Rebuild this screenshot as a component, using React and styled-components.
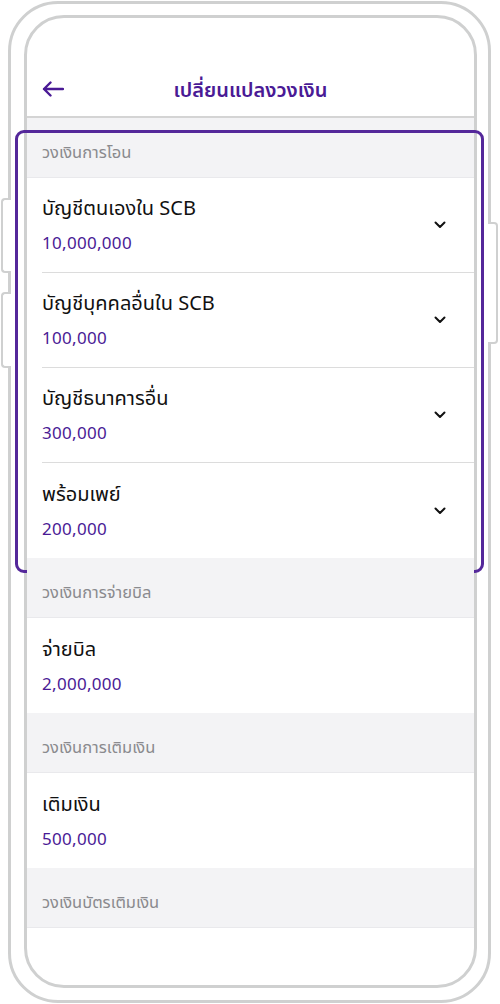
import React from "react";
import styled, { createGlobalStyle } from "styled-components";

const Global = createGlobalStyle`
  html, body { margin: 0; padding: 0; background: #fff; }
  body { font-family: "Noto Sans Thai", "Noto Sans", "DejaVu Sans", sans-serif; }
  * { box-sizing: border-box; }
`;

const PURPLE = "#4a1a95";
const FRAME = "#cfd0d0";

const Page = styled.div`
  width: 500px;
  height: 1004px;
  padding: 1px 9px 1px 8px;
  background: #fff;
`;

const Phone = styled.div`
  position: relative;
  height: 1002px;
  border: 3px solid ${FRAME};
  border-radius: 50px;
  padding: 11px 11px 12px 13px;
  background: #fff;
`;

const SideButton = styled.div`
  position: absolute;
  width: 10px;
  top: ${(p) => p.$top}px;
  height: ${(p) => p.$h}px;
  ${(p) => (p.$side === "left" ? "left: -10px;" : "right: -10px;")}
  border: 2px solid ${FRAME};
  ${(p) => (p.$side === "left" ? "border-right: none;" : "border-left: none;")}
  border-radius: ${(p) => (p.$side === "left" ? "4px 0 0 4px" : "0 4px 4px 0")};
  background: #fff;
`;

const Screen = styled.div`
  height: 973px;
  border: 3px solid ${FRAME};
  border-radius: 40px;
  display: flex;
  flex-direction: column;
  background: #fff;
`;

const Header = styled.header`
  height: 100px;
  flex: none;
  display: flex;
  align-items: center;
  padding: 44px 0 0 15px;
  border-bottom: 2px solid #d4d4d4;
  position: relative;
`;

const BackBtn = styled.button`
  border: 0;
  background: none;
  padding: 0;
  width: 22px;
  height: 16px;
  display: flex;
  cursor: pointer;
`;

const Title = styled.h1`
  position: absolute;
  left: 0;
  right: 0;
  bottom: 11px;
  margin: 0;
  text-align: center;
  color: ${PURPLE};
  font-size: 20px;
  font-weight: 600;
  line-height: 28px;
  pointer-events: none;
`;

const Group = styled.section`
  position: relative;
  ${(p) =>
    p.$highlight &&
    `
    &::after {
      content: "";
      position: absolute;
      top: 12px;
      bottom: -15px;
      left: -12px;
      right: -10px;
      border: 3px solid #54289a;
      border-radius: 9px;
      pointer-events: none;
    }
  `}
`;

const SectionLabel = styled.div`
  height: 60px;
  display: flex;
  align-items: center;
  padding: 10px 0 0 15px;
  background: #f3f3f5;
  border-bottom: 1px solid #e9e9ec;
  color: #8a8a8e;
  font-size: 16.5px;
`;

const Item = styled.div`
  height: 95px;
  padding-left: 15px;
  background: #fff;
`;

const ItemInner = styled.div`
  height: 100%;
  display: flex;
  align-items: center;
  padding-right: 28px;
  border-bottom: ${(p) => (p.$last ? "none" : "1px solid #dcdcdc")};
`;

const ItemText = styled.div`
  flex: 1;
  display: flex;
  flex-direction: column;
  gap: 10px;
  padding-bottom: 0;
`;

const ItemName = styled.div`
  color: #111;
  font-size: 20px;
  line-height: 28px;
`;

const ItemValue = styled.div`
  color: ${PURPLE};
  font-size: 17px;
  line-height: 22px;
  letter-spacing: 0.3px;
`;

const Chevron = () => (
  <svg width="12" height="8" viewBox="0 0 12 8">
    <path d="M1.5 1.5 L6 6 L10.5 1.5" fill="none" stroke="#111" strokeWidth="2" strokeLinecap="round" strokeLinejoin="round" />
  </svg>
);

const BackArrow = () => (
  <svg width="22" height="16" viewBox="0 0 22 16">
    <path d="M21 8 H2 M8.5 1.5 L2 8 L8.5 14.5" fill="none" stroke={PURPLE} strokeWidth="2.4" strokeLinecap="round" strokeLinejoin="round" />
  </svg>
);

const groups = [
  {
    label: "วงเงินการโอน",
    highlight: true,
    items: [
      { name: "บัญชีตนเองใน SCB", value: "10,000,000", expand: true },
      { name: "บัญชีบุคคลอื่นใน SCB", value: "100,000", expand: true },
      { name: "บัญชีธนาคารอื่น", value: "300,000", expand: true },
      { name: "พร้อมเพย์", value: "200,000", expand: true },
    ],
  },
  { label: "วงเงินการจ่ายบิล", items: [{ name: "จ่ายบิล", value: "2,000,000" }] },
  { label: "วงเงินการเติมเงิน", items: [{ name: "เติมเงิน", value: "500,000" }] },
  { label: "วงเงินบัตรเติมเงิน", items: [] },
];

export default function App() {
  return (
    <>
      <Global />
      <Page>
        <Phone>
          <SideButton $side="left" $top={194} $h={75} />
          <SideButton $side="left" $top={288} $h={76} />
          <SideButton $side="right" $top={218} $h={122} />
          <Screen>
            <Header>
              <BackBtn aria-label="back">
                <BackArrow />
              </BackBtn>
              <Title>เปลี่ยนแปลงวงเงิน</Title>
            </Header>
            {groups.map((g) => (
              <Group key={g.label} $highlight={g.highlight}>
                <SectionLabel>{g.label}</SectionLabel>
                {g.items.map((it, i) => (
                  <Item key={it.name}>
                    <ItemInner $last={i === g.items.length - 1}>
                      <ItemText>
                        <ItemName>{it.name}</ItemName>
                        <ItemValue>{it.value}</ItemValue>
                      </ItemText>
                      {it.expand && <Chevron />}
                    </ItemInner>
                  </Item>
                ))}
              </Group>
            ))}
          </Screen>
        </Phone>
      </Page>
    </>
  );
}
